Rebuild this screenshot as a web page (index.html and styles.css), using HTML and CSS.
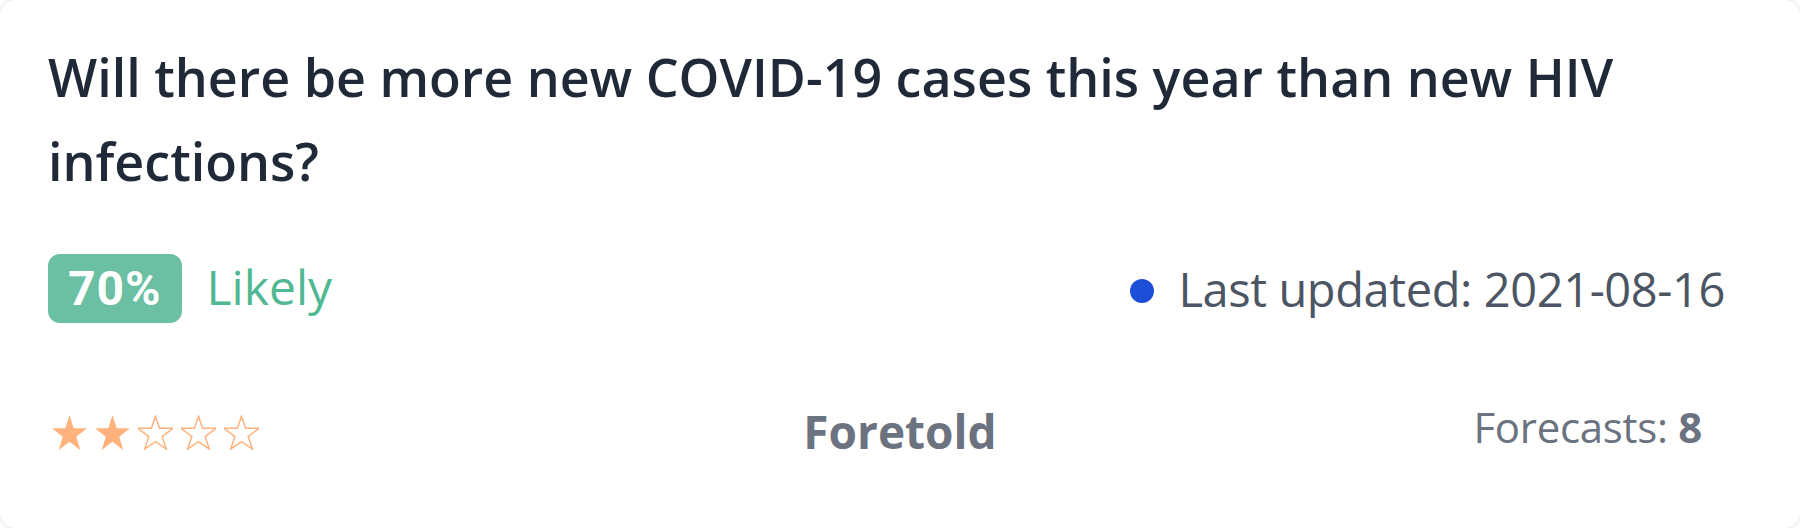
FILE: index.html
```html
<!DOCTYPE html>
<html>
  <head>
    <title>Forecast card</title>
    <link rel="stylesheet" href="styles.css">
  </head>
  <body>
    <div class="card">
      <h1 class="question">
        Will there be more new COVID-19 cases this year than new HIV infections?
      </h1>

      <div class="status-row">
        <div class="probability">
          <span class="badge">70%</span>
          <span class="label">Likely</span>
        </div>
        <div class="updated">
          <span class="dot"></span>
          <span>Last updated: 2021-08-16</span>
        </div>
      </div>

      <div class="meta-row">
        <div class="stars">
          <svg class="star" viewBox="0 0 19.02 18.09" preserveAspectRatio="none">
            <polygon class="full" points="9.51,0 11.755,6.91 19.02,6.91 13.143,11.18 15.388,18.09 9.51,13.82 3.632,18.09 5.877,11.18 0,6.91 7.265,6.91" />
          </svg>
          <svg class="star" viewBox="0 0 19.02 18.09" preserveAspectRatio="none">
            <polygon class="full" points="9.51,0 11.755,6.91 19.02,6.91 13.143,11.18 15.388,18.09 9.51,13.82 3.632,18.09 5.877,11.18 0,6.91 7.265,6.91" />
          </svg>
          <svg class="star" viewBox="0 0 19.02 18.09" preserveAspectRatio="none">
            <polygon class="empty" vector-effect="non-scaling-stroke" points="9.51,0.6 11.755,6.91 19.02,6.91 13.143,11.18 15.388,17.6 9.51,13.82 3.632,17.6 5.877,11.18 0,6.91 7.265,6.91" />
          </svg>
          <svg class="star" viewBox="0 0 19.02 18.09" preserveAspectRatio="none">
            <polygon class="empty" vector-effect="non-scaling-stroke" points="9.51,0.6 11.755,6.91 19.02,6.91 13.143,11.18 15.388,17.6 9.51,13.82 3.632,17.6 5.877,11.18 0,6.91 7.265,6.91" />
          </svg>
          <svg class="star" viewBox="0 0 19.02 18.09" preserveAspectRatio="none">
            <polygon class="empty" vector-effect="non-scaling-stroke" points="9.51,0.6 11.755,6.91 19.02,6.91 13.143,11.18 15.388,17.6 9.51,13.82 3.632,17.6 5.877,11.18 0,6.91 7.265,6.91" />
          </svg>
        </div>
        <div class="platform">Foretold</div>
        <div class="forecasts">Forecasts: <b>8</b></div>
      </div>
    </div>
  </body>
</html>
```

FILE: styles.css
```css
body {
  margin: 0;
  padding: 0;
  background-color: #fff;
  font-family: "Open Sans", sans-serif;
}
.card {
  box-sizing: border-box;
  width: 1800px;
  height: 528px;
  padding: 35px 48px 0 48px;
  background-color: #fff;
  border-radius: 16px;
  box-shadow: 0 0 6px rgba(0, 0, 0, 0.12);
  overflow: hidden;
}
.question {
  margin: 0;
  max-width: 1660px;
  font-size: 52px;
  font-weight: 600;
  line-height: 84px;
  color: #1f2937;
}
.status-row {
  display: flex;
  justify-content: space-between;
  align-items: center;
  margin-top: 51px;
  height: 69px;
}
.probability {
  display: flex;
  align-items: baseline;
}
.badge {
  height: 69px;
  padding: 0 20px;
  line-height: 69px;
  font-family: Roboto, sans-serif;
  font-size: 48px;
  font-weight: 700;
  letter-spacing: 1px;
  color: #fff;
  background-color: #6bbfa3;
  border-radius: 12px;
}
.label {
  margin-left: 25px;
  font-size: 48px;
  color: #50b892;
}
.updated {
  display: flex;
  align-items: center;
  margin-right: 27px;
  font-size: 47px;
  letter-spacing: -0.4px;
  color: #4b5563;
}
.dot {
  width: 24px;
  height: 24px;
  margin-right: 24px;
  margin-top: 5px;
  border-radius: 50%;
  background-color: #1d4ed8;
}
.meta-row {
  display: grid;
  grid-template-columns: 1fr auto 1fr;
  align-items: start;
  margin-top: 76px;
}
.stars {
  display: flex;
  gap: 8px;
  margin-top: 16px;
  margin-left: 4px;
}
.star {
  width: 35px;
  height: 35px;
}
.star .full {
  fill: #ffb27b;
}
.star .empty {
  fill: none;
  stroke: #ffb27b;
  stroke-width: 1.5;
}
.platform {
  margin-top: 2px;
  font-size: 46px;
  font-weight: 700;
  line-height: 60px;
  color: #6b7280;
}
.forecasts {
  justify-self: end;
  margin-right: 50px;
  font-size: 42px;
  letter-spacing: -0.3px;
  line-height: 56px;
  color: #6b7280;
}
.forecasts b {
  font-weight: 700;
}
```
